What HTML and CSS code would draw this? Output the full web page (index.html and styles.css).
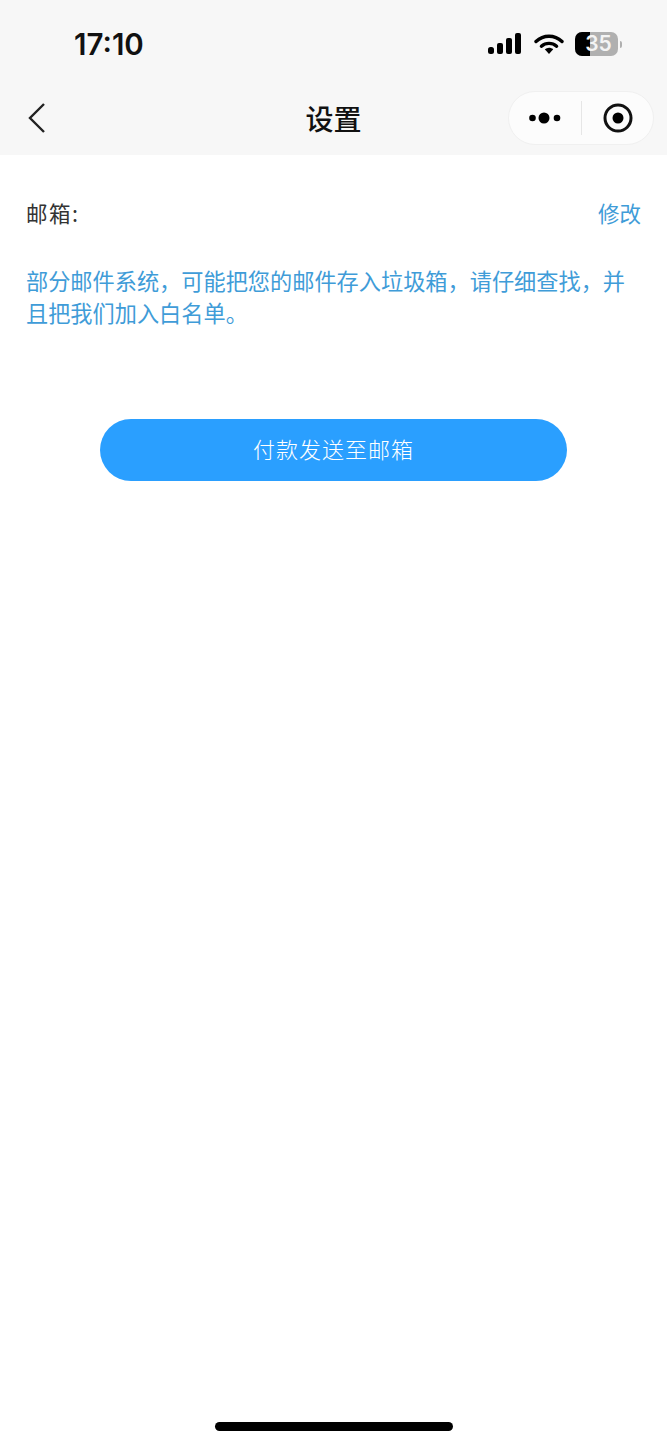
FILE: index.html
```html
<!DOCTYPE html>
<html lang="zh-CN">
<head>
    <meta charset="UTF-8">
    <meta name="viewport" content="width=device-width, initial-scale=1.0">
    <title>设置</title>
    <link rel="stylesheet" href="styles.css">
</head>
<body>
    <div class="page">
        <header class="top">
            <div class="status">
                <span class="time">17:10</span>
                <div class="status-icons">
                    <svg class="signal" width="34" height="22" viewBox="0 0 34 22">
                        <rect x="0" y="14" width="6" height="7" rx="2.5"/>
                        <rect x="9" y="10" width="6" height="11" rx="2"/>
                        <rect x="18" y="5" width="6" height="16" rx="2"/>
                        <rect x="27" y="0" width="6" height="21" rx="2"/>
                    </svg>
                    <svg class="wifi" width="30" height="22" viewBox="0 0 30 22">
                        <path d="M2 8.5C9.5 1.5 20.5 1.5 28 8.5" fill="none" stroke="#000" stroke-width="3.4" stroke-linecap="round"/>
                        <path d="M7.4 13.2C11.8 9.4 18.2 9.4 22.6 13.2" fill="none" stroke="#000" stroke-width="3.4" stroke-linecap="round"/>
                        <path d="M10.8 16.2C13.4 14.2 16.6 14.2 19.2 16.2L15 21Z"/>
                    </svg>
                    <div class="battery">
                        <div class="battery-level"></div>
                        <span class="battery-text">35</span>
                    </div>
                    <span class="battery-cap"></span>
                </div>
            </div>
            <nav class="navbar">
                <svg class="back" width="20" height="32" viewBox="0 0 20 32">
                    <path d="M17 2L3 16L17 30" fill="none" stroke="#222" stroke-width="2.4"/>
                </svg>
                <h1 class="title">设置</h1>
                <div class="capsule">
                    <svg width="34" height="14" viewBox="0 0 34 14">
                        <circle cx="3.5" cy="7" r="3.3"/>
                        <circle cx="15" cy="7" r="5.5"/>
                        <circle cx="28" cy="7" r="3.3"/>
                    </svg>
                    <span class="capsule-line"></span>
                    <svg width="30" height="30" viewBox="0 0 30 30">
                        <circle cx="15" cy="15" r="13" fill="none" stroke="#111" stroke-width="3"/>
                        <circle cx="15" cy="15" r="5.5"/>
                    </svg>
                </div>
            </nav>
        </header>

        <main class="content">
            <div class="email-row">
                <span class="email-label">邮箱:</span>
                <a class="email-edit" href="#">修改</a>
            </div>
            <p class="note">部分邮件系统，可能把您的邮件存入垃圾箱，请仔细查找，并且把我们加入白名单。</p>
            <button class="send-btn">付款发送至邮箱</button>
        </main>

        <div class="home-bar"></div>
    </div>
</body>
</html>
```

FILE: styles.css
```css
html, body {
    margin: 0;
    padding: 0;
    background-color: #fff;
}
body {
    font-family: "Noto Sans CJK SC", "Liberation Sans", sans-serif;
}
.page {
    height: 1445px;
    display: flex;
    flex-direction: column;
    overflow: hidden;
}
.top {
    height: 155px;
    background-color: #f7f7f7;
    flex-shrink: 0;
}
.status {
    height: 88px;
    display: flex;
    justify-content: space-between;
    align-items: center;
    padding: 0 45px 0 74px;
    box-sizing: border-box;
}
.time {
    font-family: Inter, "Liberation Sans", sans-serif;
    font-size: 29.5px;
    font-weight: 600;
    color: #111;
}
.status-icons {
    display: flex;
    align-items: center;
}
.signal {
    margin-right: 12px;
}
.wifi {
    margin-right: 11px;
}
.battery {
    position: relative;
    width: 43px;
    height: 24px;
    border-radius: 7px;
    background-color: #b0b0b0;
    overflow: hidden;
}
.battery-level {
    width: 15px;
    height: 100%;
    background-color: #000;
}
.battery-text {
    position: absolute;
    top: 0;
    left: 2px;
    width: 100%;
    text-align: center;
    font-family: Inter, "Liberation Sans", sans-serif;
    font-size: 21px;
    font-weight: 600;
    line-height: 24px;
    color: #f4f4f4;
}
.battery-cap {
    width: 2px;
    height: 7px;
    margin-left: 2px;
    border-radius: 0 2px 2px 0;
    background-color: #b0b0b0;
}
.navbar {
    height: 67px;
    display: flex;
    align-items: center;
    justify-content: space-between;
    padding: 0 13px 7px 27px;
    box-sizing: border-box;
    position: relative;
}
.title {
    position: absolute;
    left: 0;
    right: 0;
    top: 10px;
    margin: 0;
    text-align: center;
    font-size: 28px;
    font-weight: 500;
    line-height: 40px;
    color: #111;
}
.capsule {
    width: 146px;
    height: 54px;
    box-sizing: border-box;
    border: 1px solid #f0f0f0;
    border-radius: 27px;
    background-color: #fcfcfc;
    display: flex;
    align-items: center;
    padding: 0 20px;
    justify-content: space-between;
}
.capsule-line {
    width: 1px;
    height: 34px;
    margin-right: 4px;
    background-color: #e6e6e6;
}
.content {
    flex: 1;
    padding: 0 26px;
}
.email-row {
    display: flex;
    justify-content: space-between;
    align-items: center;
    margin-top: 41px;
    height: 32px;
}
.email-label {
    font-size: 21.5px;
    letter-spacing: 1.5px;
    color: #333;
}
.email-edit {
    font-size: 21.5px;
    color: #3f9cd8;
    text-decoration: none;
}
.note {
    margin: 36px 0 0;
    font-size: 22.2px;
    line-height: 32px;
    color: #3f9cd8;
}
.send-btn {
    display: block;
    width: 467px;
    height: 62px;
    margin: 91px auto 0;
    padding: 0 0 5px;
    border: none;
    border-radius: 31px;
    background-color: #2a9fff;
    color: #fff;
    font-family: inherit;
    font-size: 22px;
    font-weight: 300;
    letter-spacing: 1px;
}
.home-bar {
    width: 238px;
    height: 9px;
    margin: 0 auto 14px;
    border-radius: 5px;
    background-color: #000;
    flex-shrink: 0;
}
```
